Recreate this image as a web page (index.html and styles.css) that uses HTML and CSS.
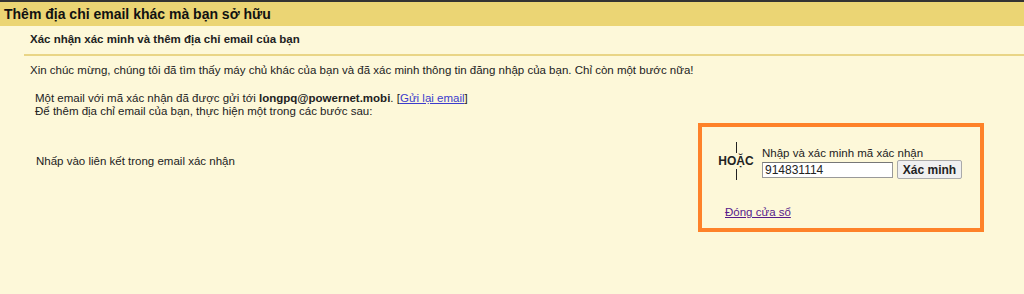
FILE: index.html
```html
<!DOCTYPE html>
<html lang="vi">
<head>
    <meta charset="UTF-8">
    <title>Thêm địa chỉ email khác mà bạn sở hữu</title>
    <link rel="stylesheet" href="styles.css">
</head>
<body>
<div class="title">Thêm địa chỉ email khác mà bạn sở hữu</div>
<div class="main">
    <!--tiêu đề phụ-->
    <div class="sub">Xác nhận xác minh và thêm địa chỉ email của bạn</div>

    <p class="msg">Xin chúc mừng, chúng tôi đã tìm thấy máy chủ khác của bạn và đã xác minh thông tin đăng nhập của bạn. Chỉ còn một bước nữa!</p>

    <p class="sent">
        Một email với mã xác nhận đã được gửi tới <b>longpq@powernet.mobi</b>. [<a href="#">Gửi lại email</a>]<br>
        Để thêm địa chỉ email của bạn, thực hiện một trong các bước sau:
    </p>

    <div class="steps">
        <div class="step1">Nhấp vào liên kết trong email xác nhận</div>

        <!--khung mã xác nhận-->
        <div class="box">
            <div class="row">
                <div class="or">
                    <span class="bar"></span>
                    <b>HOẶC</b>
                    <span class="bar"></span>
                </div>
                <div class="code">
                    <label for="code">Nhập và xác minh mã xác nhận</label>
                    <div class="field">
                        <input id="code" type="text" value="914831114">
                        <button type="button">Xác minh</button>
                    </div>
                </div>
            </div>
            <a class="close" href="#">Đóng cửa sổ</a>
        </div>
    </div>
</div>
</body>
</html>
```

FILE: styles.css
```css
*{
    margin: 0;
    padding: 0;
}
body{
    background-color: #fdf8d9;
    font-family: "Liberation Sans", Arial, sans-serif;
    font-size: 11.5px;
    color: #222;
    border-top: 2px solid #333;
}
.title{
    height: 24px;
    line-height: 24px;
    padding-left: 4px;
    background-color: #ebd574;
    font-size: 14px;
    font-weight: bold;
    color: #111;
}
.main{
    padding-left: 24px;
}
.sub{
    padding: 7px 0 0 6px;
    height: 21px;
    font-weight: bold;
    border-bottom: 2px solid #e9d586;
}
.msg{
    padding: 8px 0 0 6px;
}
.sent{
    padding: 16px 0 0 11px;
    line-height: 13px;
}
.steps{
    display: flex;
    justify-content: space-between;
    align-items: flex-start;
    padding-right: 40px;
}
.step1{
    padding: 37px 0 0 12px;
}
.box{
    width: 278px;
    height: 101px;
    margin-top: 5px;
    border: 4px solid #fe8229;
}
.row{
    display: flex;
    padding: 15px 0 0 17px;
}
.or{
    display: flex;
    flex-direction: column;
    align-items: center;
    width: 34px;
}
.or b{
    line-height: 16px;
    font-size: 12px;
}
.bar{
    width: 1px;
    height: 11px;
    background-color: #222;
}
.code{
    padding: 4px 0 0 9px;
}
.code label{
    display: block;
    line-height: 14px;
}
.field{
    display: flex;
    align-items: center;
    gap: 4px;
}
input{
    width: 125px;
    height: 14px;
    padding: 0 2px;
    border: 1px solid #999;
    border-top-color: #777;
    font-family: inherit;
    font-size: 12px;
    color: #222;
    background-color: #fff;
}
button{
    width: 65px;
    height: 19px;
    border: 1px solid #aaa;
    border-radius: 2px;
    background-color: #f0f0f0;
    font-family: inherit;
    font-size: 12px;
    font-weight: bold;
    color: #222;
}
.close{
    display: block;
    margin: 26px 0 0 23px;
    width: max-content;
}
a{
    color: #551a8b;
}
.sent a{
    color: #3c3ccc;
}
```
